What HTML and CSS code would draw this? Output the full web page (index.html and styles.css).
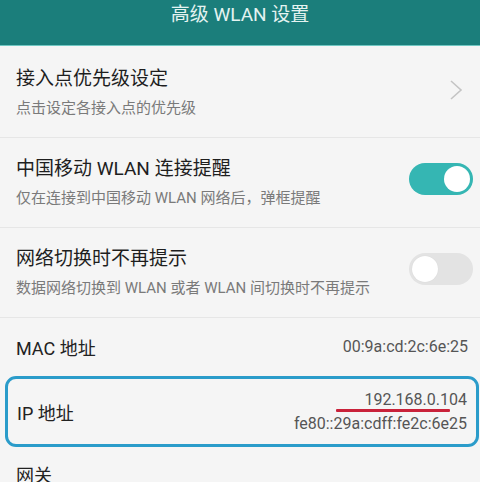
FILE: index.html
```html
<!DOCTYPE html>
<html lang="zh-CN">
<head>
<meta charset="utf-8">
<title>高级 WLAN 设置</title>
<link rel="stylesheet" href="styles.css">
</head>
<body>
<header class="appbar">高级 WLAN 设置</header>
<main class="list">
  <div class="row first">
    <div class="texts">
      <div class="title">接入点优先级设定</div>
      <div class="sub">点击设定各接入点的优先级</div>
    </div>
    <svg class="chev" width="14" height="22" viewBox="0 0 14 22"><path d="M2 2 L12 11 L2 20" fill="none" stroke="#c4c4c4" stroke-width="1.6"/></svg>
  </div>
  <div class="row">
    <div class="texts">
      <div class="title">中国移动 WLAN 连接提醒</div>
      <div class="sub">仅在连接到中国移动 WLAN 网络后，弹框提醒</div>
    </div>
    <div class="switch on"><span class="knob"></span></div>
  </div>
  <div class="row">
    <div class="texts">
      <div class="title">网络切换时不再提示</div>
      <div class="sub">数据网络切换到 WLAN 或者 WLAN 间切换时不再提示</div>
    </div>
    <div class="switch off"><span class="knob"></span></div>
  </div>
  <div class="row simple">
    <div class="label">MAC 地址</div>
    <div class="value">00:9a:cd:2c:6e:25</div>
  </div>
  <div class="ipbox">
    <div class="label">IP 地址</div>
    <div class="values">
      <div class="value ip4">192.168.0.104</div>
      <div class="value">fe80::29a:cdff:fe2c:6e25</div>
    </div>
  </div>
  <div class="row gateway">
    <div class="label">网关</div>
  </div>
</main>
</body>
</html>
```
FILE: styles.css
```css
* { box-sizing: border-box; }
html, body { margin: 0; padding: 0; }
body {
  width: 480px;
  height: 482px;
  overflow: hidden;
  background: #f5f5f5;
  font-family: Roboto, "Noto Sans CJK SC", sans-serif;
  color: #202020;
}
.appbar {
  height: 46px;
  background: #1b7e7b;
  color: #e4f3f1;
  font-size: 19px;
  text-align: center;
  line-height: 30px;
  border-bottom: 1px solid #6fc7c2;
}
.list { display: flex; flex-direction: column; }
.row {
  display: flex;
  align-items: center;
  justify-content: space-between;
  padding: 19px 7px 19px 16px;
  border-bottom: 1px solid #e6e6e6;
}
.row.first { padding-top: 21px; }
.texts { display: flex; flex-direction: column; gap: 7px; }
.title { font-size: 19px; line-height: 24px; color: #1e1e1e; }
.sub { font-size: 15px; line-height: 20px; color: #7a7a7a; }
.chev { margin-right: 10px; margin-top: -6px; }
.switch {
  position: relative;
  width: 64px;
  height: 32px;
  border-radius: 16px;
  margin-top: -8px;
}
.switch.on { background: #35b6b3; }
.switch.off { background: #e3e3e3; }
.knob {
  position: absolute;
  top: 3px;
  width: 26px;
  height: 26px;
  border-radius: 50%;
  background: #fff;
}
.switch.on .knob { right: 3px; }
.switch.off .knob { left: 3px; box-shadow: 0 0 1px rgba(0,0,0,0.1); }
.row.simple {
  height: 57px;
  padding: 0 12px 0 16px;
  border-bottom: none;
}
.label { font-size: 18px; color: #222; }
.value { font-size: 16px; color: #555; }
.ipbox {
  margin: 1px 1px 0 5px;
  height: 71px;
  border: 3px solid #2b9cca;
  border-radius: 11px;
  display: flex;
  align-items: center;
  justify-content: space-between;
  padding: 0 9px 0 9px;
}
.values { display: flex; flex-direction: column; align-items: flex-end; gap: 3px; }
.ip4 {
  position: relative;
  padding-bottom: 2px;
}
.ip4::after {
  content: "";
  position: absolute;
  left: -28px;
  right: 17px;
  bottom: -1px;
  height: 3px;
  background: #c9223a;
  border-radius: 1px;
}
.row.gateway {
  padding: 14px 16px;
  border-bottom: none;
}
```
